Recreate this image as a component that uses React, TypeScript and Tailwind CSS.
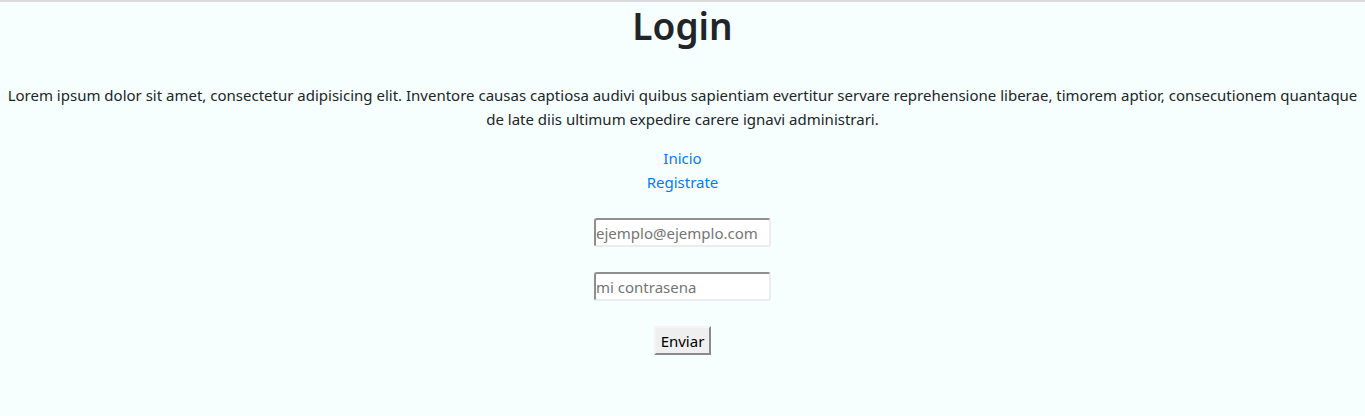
export default function App() {
  return (
    <div className="min-h-[416px] bg-[#f6fffe] border-t-2 border-t-[#dcdcdc] text-[#212529] text-center" style={{ fontFamily: '"Noto Sans", "Open Sans", Arial, sans-serif' }}>
      <h1 className="text-[37px] leading-[48px] font-semibold m-0">Login</h1>
      <p className="mt-[33px] mb-[15px] text-[15px] leading-6 px-[4px]">
        Lorem ipsum dolor sit amet, consectetur adipisicing elit. Inventore causas captiosa audivi quibus sapientiam evertitur servare reprehensione liberae, timorem aptior, consecutionem quantaque de late diis ultimum expedire carere ignavi administrari.
      </p>
      <div className="flex flex-col items-center text-[15px] leading-6">
        <a href="#" className="text-[#007bff]">Inicio</a>
        <a href="#" className="text-[#007bff]">Registrate</a>
      </div>
      <form className="flex flex-col items-center" onSubmit={(e) => e.preventDefault()}>
        <input
          type="email"
          placeholder="ejemplo@ejemplo.com"
          className="mt-[24px] w-[177px] h-[29px] bg-white border-2 border-t-[#8f8f8f] border-l-[#8f8f8f] border-b-[#ececec] border-r-[#ececec] rounded-[3px] px-0 text-[15px] text-black placeholder:text-[#757575] outline-none"
        />
        <input
          type="password"
          placeholder="mi contrasena"
          className="mt-[25px] w-[177px] h-[29px] bg-white border-2 border-t-[#8f8f8f] border-l-[#8f8f8f] border-b-[#ececec] border-r-[#ececec] rounded-[3px] px-0 text-[15px] text-black placeholder:text-[#757575] outline-none"
        />
        <button
          type="submit"
          className="mt-[25px] h-[29px] px-[5px] bg-[#efefef] border-2 border-t-[#f5f5f5] border-l-[#f5f5f5] border-b-[#8a8a8a] border-r-[#8a8a8a] text-[15px] leading-5 text-black"
        >
          Enviar
        </button>
      </form>
    </div>
  );
}
